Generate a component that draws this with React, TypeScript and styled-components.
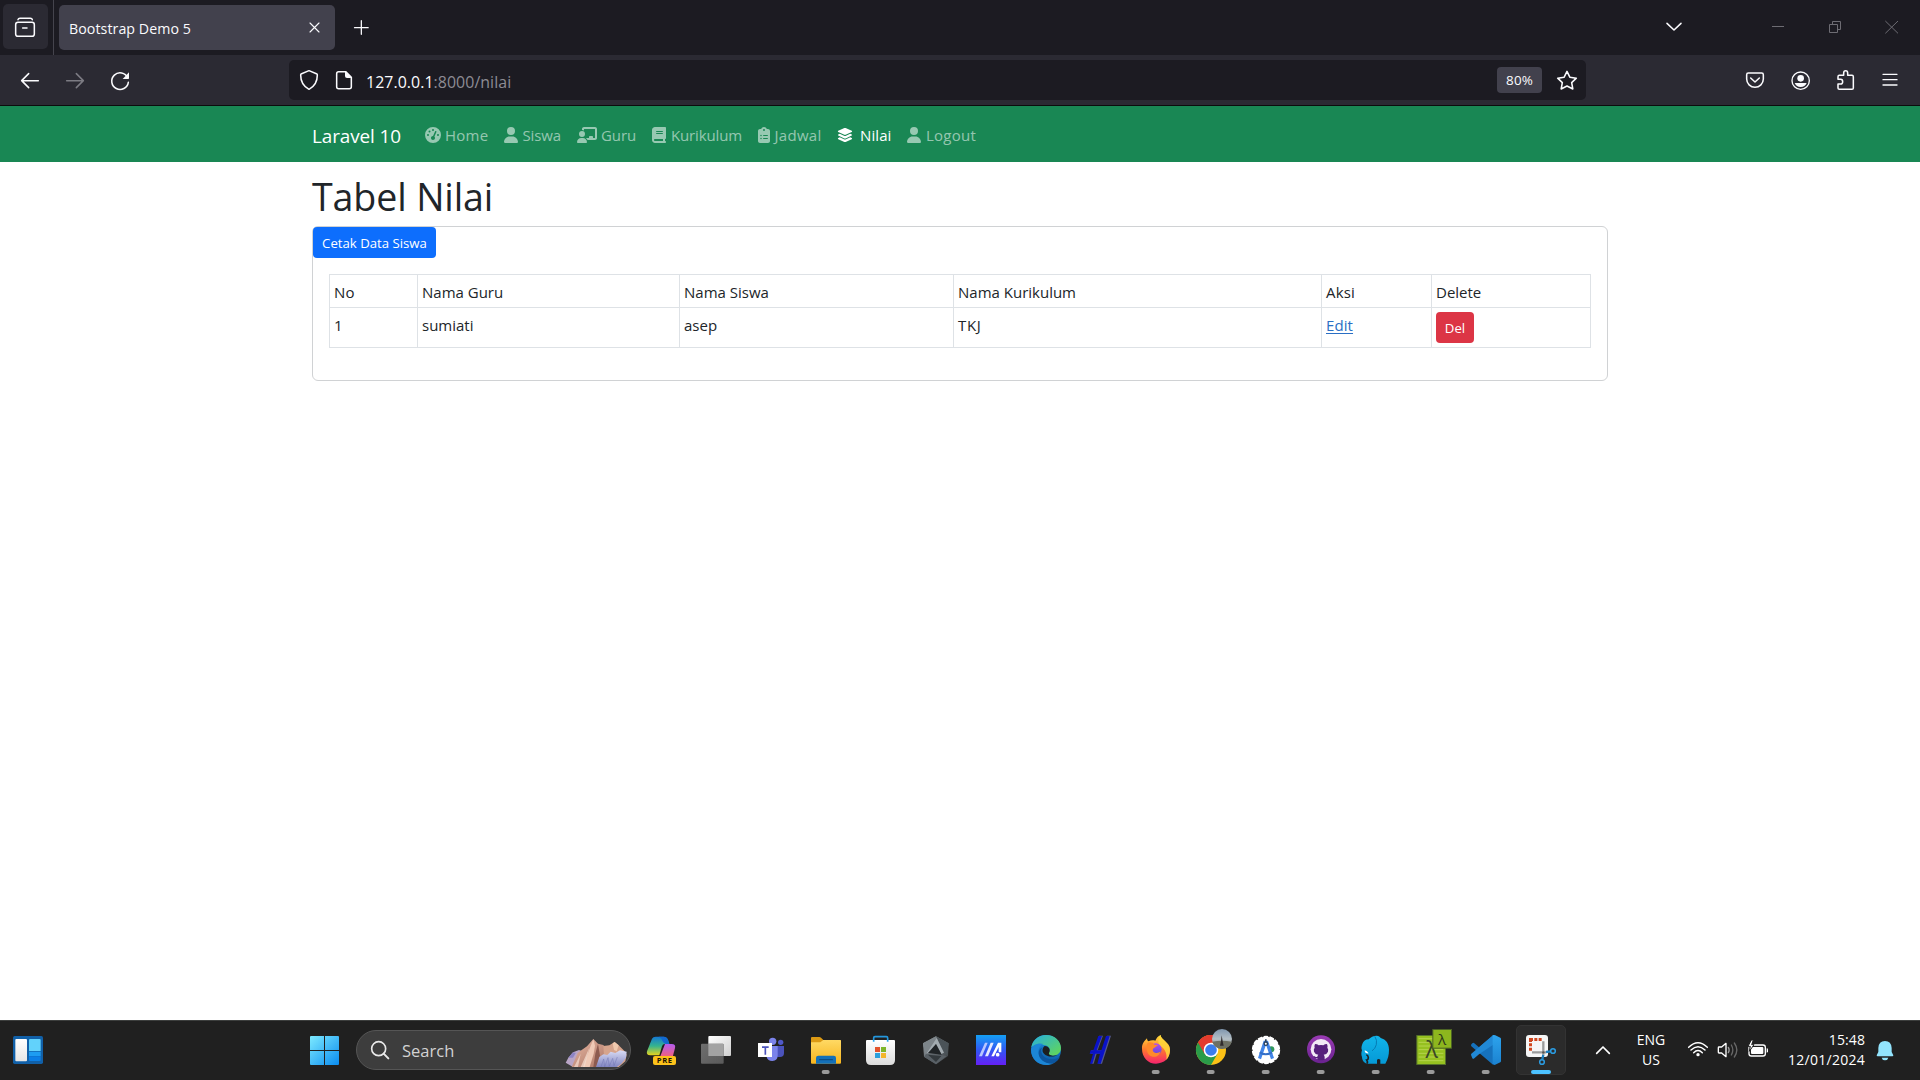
import React from 'react';
import styled, { createGlobalStyle } from 'styled-components';
import { FaGaugeHigh, FaUser, FaChalkboardUser, FaBook, FaClipboardList, FaLayerGroup } from 'react-icons/fa6';

const Global = createGlobalStyle`
  * { box-sizing: border-box; }
  body { margin: 0; background: #fff; overflow: hidden; }
`;

const Screen = styled.div`
  display: flex;
  flex-direction: column;
  width: 1920px;
  height: 1080px;
  font-family: 'Open Sans', 'Noto Sans', sans-serif;
  color: #212529;
`;

const Label = styled.span<{ $size?: number; $track?: number; $color?: string; $drop?: number }>`
  font-size: ${(p) => p.$size ?? 15}px;
  letter-spacing: ${(p) => p.$track ?? 0}px;
  color: ${(p) => p.$color ?? 'inherit'};
  padding-top: ${(p) => p.$drop ?? 0}px;
  white-space: pre;
`;

/* ---------- Browser chrome ---------- */

const TabStrip = styled.div`
  display: flex;
  align-items: center;
  height: 55px;
  padding-left: 3px;
  background: #1c1b22;
  color: #fbfbfe;
`;

const ViewButton = styled.div`
  height: 45px;
  width: 45px;
  margin-bottom: 2px;
  border-radius: 5px;
  background: #2b2a33;
`;

const StripDivider = styled.div`
  width: 1px;
  height: 55px;
  margin: 0 5px;
  background: #45444d;
`;

const Tab = styled.div`
  display: flex;
  align-items: center;
  justify-content: space-between;
  width: 276px;
  height: 45px;
  padding: 0 15px 0 10px;
  border-radius: 5px;
  background: #42414d;
`;

const StripEnd = styled.div`
  display: flex;
  margin-left: auto;
`;

const WindowControls = styled.div`
  display: flex;
  margin-left: 55px;
`;

const Toolbar = styled.div`
  display: flex;
  align-items: center;
  height: 51px;
  padding: 0 7px 0 8px;
  background: #2b2a33;
  border-bottom: 1px solid #0c0c0d;
  color: #fbfbfe;
`;

const AddressBar = styled.div`
  display: flex;
  align-items: center;
  width: 1297px;
  height: 40px;
  margin-left: 146px;
  border-radius: 5px;
  background: #1c1b22;
`;

const ZoomBadge = styled.div`
  display: flex;
  align-items: center;
  justify-content: center;
  width: 45px;
  height: 26px;
  margin-left: auto;
  border-radius: 4px;
  background: #42414d;
`;

const ToolbarEnd = styled.div`
  display: flex;
  margin-left: auto;
`;

const Svg = styled.svg`
  display: block;
  flex: none;
  overflow: visible;
`;

/* Artwork is drawn on a grid three times finer than the screen. */
function Art({ box, children }: { box: [number, number, number, number]; children: React.ReactNode }) {
  return (
    <Svg width={box[2] / 3} height={box[3] / 3} viewBox={box.join(' ')} fill="none">
      {children}
    </Svg>
  );
}

const line = { stroke: '#fbfbfe', strokeWidth: 4.6, strokeLinecap: 'round' as const, strokeLinejoin: 'round' as const };
const dim = { stroke: '#6d6c73', strokeWidth: 3 };

function BrowserChrome() {
  return (
    <>
      <TabStrip>
        <ViewButton>
          <Art box={[9, 12, 135, 135]}>
            <path d="M54 59q1-4 6-4h31q5 0 6 4" {...line} />
            <rect x="47" y="67" width="56" height="42" rx="7" {...line} />
            <path d="M68 84h13" {...line} />
          </Art>
        </ViewButton>
        <StripDivider />
        <Tab>
          <Label $size={14.2} $track={0.07} $drop={2}>Bootstrap Demo 5</Label>
          <Art box={[927, 66, 33, 33]}>
            <path d="M930 69l27 27M957 69l-27 27" {...line} strokeWidth={3.4} />
          </Art>
        </Tab>
        <Art box={[1005, 15, 150, 135]}>
          <path d="M1084 62v41M1063.500 83h41" {...line} strokeWidth={3.8} />
        </Art>
        <StripEnd>
          <Art box={[642, 0, 120, 165]}>
            <path d="M681 70l21 20l21-20" {...line} />
          </Art>
          <WindowControls>
            <Art box={[927, 0, 171, 165]}>
              <path d="M996 79.500h36" {...dim} />
            </Art>
            <Art box={[1098, 0, 171, 165]}>
              <path d="M1168.500 73.500h24v24h-24zM1177.500 73v-8.500h24v24h-8.500" {...dim} />
            </Art>
            <Art box={[1269, 0, 171, 165]}>
              <path d="M1336 63l38 37M1374 63l-38 37" {...dim} />
            </Art>
          </WindowControls>
        </StripEnd>
      </TabStrip>
      <Toolbar>
        <Art box={[24, 165, 135, 150]}>
          <path d="M115 242H66M86 221L65 242l21 21" {...line} />
        </Art>
        <Art box={[159, 165, 135, 150]}>
          <path d="M200 242h49M229 221l21 21l-21 21" {...line} stroke="#7c7b83" />
        </Art>
        <Art box={[294, 165, 135, 150]}>
          <path d="M383 233a25 25 0 1 0 2 14" {...line} />
          <path d="M387 217v18q0 2-2 2h-17z" fill="#fbfbfe" />
        </Art>
        <AddressBar>
          <Art box={[867, 180, 231, 120]}>
            <path d="M927 212l24 10q1 0 1 3c0 19-8 34-25 43c-17-9-25-24-25-43q0-3 1-3z" {...line} />
            <path d="M1016 215h21l17 17v28q0 6-6 6h-32q-6 0-6-6v-39q0-6 6-6z" {...line} />
            <path d="M1035 214l20 20h-14q-6 0-6-6z" fill="#fbfbfe" />
          </Art>
          <Label $size={15.9} $drop={3} $track={0.06}>127.0.0.1</Label>
          <Label $size={15.9} $drop={3} $track={0.06} $color="#8d8c94">:8000/nilai</Label>
          <ZoomBadge>
            <Label $size={13.4} $track={0.15}>80%</Label>
          </ZoomBadge>
          <Art box={[306, 180, 132, 120]}>
            <path d="M381 214l8.500 17.500l19.500 3l-14 13.500l3.500 19l-17.500-9l-17.500 9l3.500-19l-14-13.500l19.500-3z" {...line} />
          </Art>
        </AddressBar>
        <ToolbarEnd>
          <Art box={[879, 165, 135, 150]}>
            <path d="M925 219h40q5 0 5 5v13a25 25 0 0 1-50 0v-13q0-5 5-5z" {...line} />
            <path d="M932 234l13 12l13-12" {...line} />
          </Art>
          <Art box={[1014, 165, 135, 150]}>
            <circle cx="1082" cy="242" r="26" {...line} strokeWidth={4} />
            <circle cx="1082" cy="235" r="10" fill="#fbfbfe" />
            <path d="M1064 249h36q-5 12-18 12t-18-12z" fill="#fbfbfe" />
          </Art>
          <Art box={[1149, 165, 135, 150]}>
            <path d="M1194 238v-8q0-4 4-4h13v-7q0-6.500 6-6.500t6 6.500v7h13q4 0 4 4v34q0 4-4 4h-38q-4 0-4-4v-12h8q6 0 6-7t-6-7z" {...line} />
          </Art>
          <Art box={[1284, 165, 135, 150]}>
            <path d="M1329 223h42M1329 239h42M1329 255h42" {...line} strokeWidth={4} />
          </Art>
        </ToolbarEnd>
      </Toolbar>
    </>
  );
}

/* ---------- Page ---------- */

const Page = styled.main`
  flex: 1;
  background: #fff;
`;

const Navbar = styled.nav`
  display: flex;
  align-items: center;
  height: 56px;
  padding-left: 312px;
  background: #198754;
`;

const Brand = styled.a`
  width: 89px;
  margin-right: 16px;
  padding-top: 3px;
  font-size: 18.9px;
  letter-spacing: -0.09px;
  line-height: 30px;
  color: #fff;
  white-space: nowrap;
`;

const NavLink = styled.a<{ $active?: boolean; $width: number; $gap: number }>`
  display: flex;
  align-items: center;
  gap: ${(p) => p.$gap}px;
  width: ${(p) => p.$width}px;
  height: 40px;
  padding: 2px 0 0 8px;
  color: ${(p) => (p.$active ? '#fff' : 'rgba(255, 255, 255, 0.55)')};
  white-space: nowrap;
  svg { flex: none; }
`;

const Container = styled.div`
  width: 1296px;
  margin: 8px auto 0;
`;

const Heading = styled.h1`
  height: 48px;
  margin: 0 0 8px;
  padding-top: 3px;
  font-size: 37.6px;
  font-weight: 400;
  letter-spacing: -0.13px;
  line-height: 48px;
`;

const Card = styled.section`
  display: flex;
  flex-direction: column;
  align-items: flex-start;
  height: 155px;
  border: 1px solid #d0d2d4;
  border-radius: 6px;
`;

const Button = styled.button<{ $bg: string; $width: number }>`
  display: flex;
  align-items: center;
  justify-content: center;
  width: ${(p) => p.$width}px;
  height: 31px;
  padding: 0;
  border: 0;
  border-radius: 4px;
  background: ${(p) => p.$bg};
  color: #fff;
  font-family: inherit;
`;

const Table = styled.table`
  width: 1261px;
  margin: 16px 0 0 16px;
  border-collapse: collapse;
  table-layout: fixed;
`;

const Row = styled.tr<{ $height: number }>`
  height: ${(p) => p.$height}px;
`;

const Cell = styled.td<{ $control?: boolean }>`
  padding: ${(p) => (p.$control ? '4px' : '5px 4px 3px')};
  border: 1px solid #dee2e6;
  line-height: 24px;
  vertical-align: top;
`;

const EditLink = styled.a`
  color: #2a6fc4;
  text-decoration: underline;
  text-underline-offset: 2px;
`;

const navItems = [
  { icon: FaGaugeHigh, iconWidth: 16, label: 'Home', width: 79, track: 0.25, gap: 4 },
  { icon: FaUser, iconWidth: 14, label: 'Siswa', width: 73, track: -0.15, gap: 4.5 },
  { icon: FaChalkboardUser, iconWidth: 20, label: 'Guru', width: 75, track: -0.1, gap: 4 },
  { icon: FaBook, iconWidth: 14, label: 'Kurikulum', width: 106, track: -0.13, gap: 5 },
  { icon: FaClipboardList, iconWidth: 12, label: 'Jadwal', width: 79, track: 0.3, gap: 4.5 },
  { icon: FaLayerGroup, iconWidth: 16, label: 'Nilai', width: 70, track: 0.1, gap: 7, active: true },
  { icon: FaUser, iconWidth: 14, label: 'Logout', width: 90, track: 0.24, gap: 5 },
];

const columns = [88, 262, 274, 368, 110, 159];

function Website() {
  return (
    <Page>
      <Navbar>
        <Brand>Laravel 10</Brand>
        {navItems.map(({ icon: Icon, ...item }) => (
          <NavLink key={item.label} $active={item.active} $width={item.width} $gap={item.gap}>
            <Icon style={{ width: item.iconWidth, height: 16 }} />
            <Label $track={item.track}>{item.label}</Label>
          </NavLink>
        ))}
      </Navbar>
      <Container>
        <Heading>Tabel Nilai</Heading>
        <Card>
          <Button $bg="#0d6efd" $width={123}>
            <Label $size={13.2}>Cetak Data Siswa</Label>
          </Button>
          <Table>
            <colgroup>
              {columns.map((w, i) => (
                <col key={i} width={w} />
              ))}
            </colgroup>
            <tbody>
              <Row $height={33}>
                {['No', 'Nama Guru', 'Nama Siswa', 'Nama Kurikulum', 'Aksi', 'Delete'].map((t) => (
                  <Cell key={t}><Label $track={t.length < 5 ? 0.2 : 0}>{t}</Label></Cell>
                ))}
              </Row>
              <Row $height={40}>
                {['1', 'sumiati', 'asep', 'TKJ'].map((t) => (
                  <Cell key={t}><Label $track={t === 'TKJ' ? 0.7 : 0}>{t}</Label></Cell>
                ))}
                <Cell><EditLink><Label $track={0.1}>Edit</Label></EditLink></Cell>
                <Cell $control>
                  <Button $bg="#dc3545" $width={38}><Label $size={13.2}>Del</Label></Button>
                </Cell>
              </Row>
            </tbody>
          </Table>
        </Card>
      </Container>
    </Page>
  );
}

/* ---------- Taskbar ---------- */

const Taskbar = styled.footer`
  display: flex;
  height: 60px;
  background: #202020;
  box-shadow: inset 0 1px #3c3e3d;
  color: #fff;
`;

const Widgets = styled.div`
  width: 300px;
`;

const SearchPill = styled.div`
  display: flex;
  align-items: center;
  width: 275px;
  height: 40px;
  margin: 10px 2px 0 6px;
  border: 1px solid #555;
  border-radius: 20px;
  background: #3d3d3d;
  overflow: hidden;
`;

const PillArt = styled.div`
  margin-left: auto;
`;

const Tray = styled.div`
  display: flex;
  margin-left: auto;
`;

const TrayText = styled.div<{ $width: number; $align: string }>`
  display: flex;
  flex-direction: column;
  align-items: ${(p) => p.$align};
  width: ${(p) => p.$width}px;
  padding-top: 10px;
  line-height: 20px;
`;

const TaskIcon = ({ x, on, children }: { x: number; on?: boolean; children: React.ReactNode }) => (
  <Art box={[x, 30, 165, 180]}>
    {children}
    {on && <rect x={x + 71} y="180" width="24" height="12" rx="6" fill="#9a9a9a" />}
  </Art>
);

function Gradients() {
  const g = (id: string, a: string, b: string, diag = true, mid?: string) => (
    <linearGradient id={id} x1="0" y1="0" x2={diag ? 1 : 0} y2="1">
      <stop offset="0" stopColor={a} />
      {mid && <stop offset=".5" stopColor={mid} />}
      <stop offset="1" stopColor={b} />
    </linearGradient>
  );
  return (
    <defs>
      {g('win', '#7deaff', '#0a8cf0')}
      {g('wid', '#ffffff', '#e6e6e6', false)}
      {g('copA', '#1478d4', '#e9d51c', false, '#35b48e')}
      {g('copB', '#b45cf0', '#f2617a', false)}
      {g('tv', '#ffffff', '#cfcfcf')}
      {g('tv2', '#6e6e6e', '#5a5a5a')}
      {g('fold', '#ffd964', '#f7b51e', false)}
      {g('store', '#ffffff', '#dcdcdc', false)}
      {g('arm', '#9ba3a8', '#32373b')}
      {g('asus', '#14a0f4', '#6520f5', false, '#3057f4')}
      {g('edA', '#25aee0', '#66d94f')}
      {g('edB', '#1a8fe0', '#0c59a4', false)}
      {g('ffA', '#ffde3c', '#f5236e', false, '#ff7a2c')}
      {g('ffB', '#b14cf0', '#5a4ad8', false)}
      {g('mtA', '#e6b7a4', '#a8705f')}
      {g('mtB', '#d9dcf5', '#8286c0', false)}
      {g('gh', '#9a3bb4', '#6a2290', false)}
      {g('el', '#12b5ea', '#0599d6', false)}
      {g('photo', '#7f96ae', '#7b7d78', false, '#b4bfc6')}
      {g('vs', '#2da4ee', '#1b82d0', false)}
    </defs>
  );
}

const ActiveApp = styled.div`
  position: relative;
  width: 55px;
  height: 60px;
`;

const ActivePlate = styled.div`
  position: absolute;
  left: 3px;
  top: 5px;
  width: 50px;
  height: 50px;
  border: 1px solid #333;
  border-radius: 5px;
  background: #2b2b2b;
`;

const ActiveArt = styled.div`
  position: relative;
`;

function DesktopBar() {
  return (
    <Taskbar>
      <Widgets>
        <Art box={[0, 30, 900, 180]}>
          <Gradients />
          <rect x="39" y="78" width="90" height="84" rx="5" fill="#1160a8" />
          <rect x="46" y="87" width="35" height="67" rx="3" fill="url(#wid)" />
          <path d="M90 87h29q3 0 3 3v33H87V90q0-3 3-3z" fill="#62d2fb" />
          <path d="M87 125h35v13H87z" fill="#1d9df2" />
          <path d="M87 139h35v11q0 3-3 3H90q-3 0-3-3z" fill="#0b7fe6" />
        </Art>
      </Widgets>
      <Art box={[0, 30, 150, 180]}>
        <path d="M33 78h39v42H30V81q0-3 3-3zM75 78h39q3 0 3 3v39H75zM30 123h42v42H33q-3 0-3-3zM75 123h42v39q0 3-3 3H75z" fill="url(#win)" />
      </Art>
      <SearchPill>
        <Art box={[171, 63, 135, 114]}>
          <circle cx="236" cy="116" r="21" stroke="#e8e8e8" strokeWidth="5" />
          <path d="M251 131l14 14" stroke="#e8e8e8" strokeWidth="6" strokeLinecap="round" />
        </Art>
        <Label $size={16.5} $color="#d2d2d2">Search</Label>
        <PillArt>
          <Art box={[786, 63, 204, 114]}>
            <path d="M797 158l8-15l14-16l18-7l10 4l-8 47h-20z" fill="#b9a5c6" />
            <path d="M805 143l14-16l8 2l-8 14z" fill="#8c84c4" />
            <path d="M815 171l18-42l13-10l15-10l19-22l14 14l16 4l20 26l10 40z" fill="url(#mtA)" />
            <path d="M880 88l-9 22l-22 61h20l12-40l4-24z" fill="#efc9b6" />
            <path d="M894 101l6 36l-8 34h-12l6-40z" fill="#8d5b50" />
            <path d="M910 108l18-2l16-10l12 10l18 18l6 10l-4 20l-20 17h-42z" fill="#d6a48c" />
            <path d="M938 100l6-4l12 10l-6 18l-8-4z" fill="#f0c9ae" />
            <path d="M888 171l10-30l12-8l12 2l10-10l14 4l14-8l20 4l-2 18l-14 18l-14 10z" fill="url(#mtB)" />
            <path d="M903 171l8-24l3 24l10-28l4 26l10-24l4 22l10-26" stroke="#7276b4" strokeWidth="1.500" />
            <path d="M822 171l20-40l-8 40zM842 171l26-58l-14 58z" fill="#f5ddd0" opacity=".7" />
          </Art>
        </PillArt>
      </SearchPill>

      <TaskIcon x={-21}>
        <path d="M36 86q3-6 11-6h24q9 0 13 9l4 13h-14q-6 0-8 7l-8 27H31q-13 0-10-12z" fill="url(#copA)" />
        <path d="M56 80h15q9 0 13 9l4 13h-10q-8-1-10-8q-3-11-12-14z" fill="#1268cf" />
        <path d="M75 102h20q13 0 10 12l-6 23q-2 4-8 4H60z" fill="url(#copB)" />
        <rect x="39" y="138" width="69" height="27" rx="6" fill="#fcc21b" />
        <text x="74" y="160" textAnchor="middle" fontFamily="Open Sans" fontWeight="700" fontSize="23" letterSpacing="1.500" fill="#1c1400">PRE</text>
      </TaskIcon>
      <TaskIcon x={144}>
        <rect x="205" y="78" width="68" height="60" rx="3" fill="url(#tv)" />
        <rect x="183" y="101" width="68" height="60" rx="3" fill="url(#tv2)" />
        <path d="M205 101h43q3 0 3 3v34h-46z" fill="#a3a3a3" />
      </TaskIcon>
      <TaskIcon x={309}>
        <circle cx="422" cy="97" r="8" fill="#5059c9" />
        <path d="M404 108h28v21q0 12-12 12h-10z" fill="#4b53bc" />
        <circle cx="398" cy="94" r="11" fill="#7b83eb" />
        <path d="M378 108h35v28q0 17-16 17q-14 0-17-12z" fill="#7b83eb" />
        <rect x="354" y="99" width="42" height="42" rx="1" fill="#fff" />
        <path d="M366 109h20v5h-7.500v20h-5v-20H366z" fill="#4b53bc" />
      </TaskIcon>
      <TaskIcon x={474} on>
        <path d="M513 84q0-3 3-3h22q3 0 5 2l7 7h50q3 0 3 3v20h-90z" fill="#dc9a14" />
        <path d="M513 97h28l9-7h50q3 0 3 3v65q0 3-3 3h-84q-3 0-3-3z" fill="url(#fold)" />
        <path d="M528 161v-17q0-7 7-7h46q7 0 7 7v17z" fill="#1470b8" />
        <path d="M539 149h38" stroke="#0c4d86" strokeWidth="4" strokeLinecap="round" />
      </TaskIcon>
      <TaskIcon x={639}>
        <path d="M701 95V84q0-4 4-4h34q4 0 4 4v11" stroke="#2497dd" strokeWidth="5" />
        <path d="M681 90h81q3 0 3 3v57q0 15-15 15h-57q-15 0-15-15V93q0-3 3-3z" fill="url(#store)" />
        <path d="M701 95v-5M743 95v-5" stroke="#2aa6ee" strokeWidth="5" />
        <path d="M705 111h15v15h-15z" fill="#e2532c" />
        <path d="M723 111h15v15h-15z" fill="#7db52a" />
        <path d="M705 129h15v15h-15z" fill="#2ba0dc" />
        <path d="M723 129h15v15h-15z" fill="#f3b62c" />
      </TaskIcon>
      <TaskIcon x={804}>
        <path d="M888 79l38 21l-2 38l-36 25l-36-23l-3-40z" fill="url(#arm)" />
        <path d="M888 79l38 21l-6 36l-12-14z" fill="#4b5358" />
        <path d="M888 79l-39 21l8 34l18-26z" fill="#7d858a" />
        <path d="M890 84l22 44l-8 4l-16-30l-20 26l-8 2z" fill="#a2abb0" />
        <path d="M888 102l17 32l-41-5z" fill="#202427" />
        <path d="M858 132l50 4l12 2l-32 25l-36-23z" fill="#596066" />
        <path d="M864 134l40 4l-16 18z" fill="#33393d" />
      </TaskIcon>
      <TaskIcon x={9}>
        <rect x="48" y="75" width="90" height="90" fill="url(#asus)" />
        <path d="M75 98h8l-17 41h-9z" fill="#b9c6ff" />
        <path d="M92 98h9l-17 41h-9z" fill="#e6e9ff" />
        <path d="M114 98h10v29h-8v-16l-14 28h-8z" fill="#fff" />
        <circle cx="113" cy="134" r="5.500" fill="#fff" />
      </TaskIcon>
      <TaskIcon x={174}>
        <circle cx="258" cy="120" r="45" fill="url(#edB)" />
        <path d="M214 112c3-22 22-37 44-37c27 0 45 19 45 39c0 14-11 23-24 23c-10 0-15-4-13-8c6-8 3-20-10-23c-18-5-34-3-42 6z" fill="url(#edA)" />
        <path d="M213 117c6-13 22-20 38-15c-13 5-17 16-15 28c3 15 15 27 33 30c6 1 12 0 14-1c-30 16-70 0-70-42z" fill="#1c86d6" />
        <path d="M248 112c-9 8-4 26 12 33c12 5 26 4 40-4c-4 8-10 14-17 18c-22 6-45-8-47-27c-1-9 4-17 12-20z" fill="#0c559e" />
        <path d="M254 108c-8 6-8 17-2 23c8 9 26 12 40 4c-12 5-28 1-25-6c5-8 2-20-13-21z" fill="#1d1f20" />
      </TaskIcon>
      <TaskIcon x={339}>
        <path d="M417 77h12l-16 44h14l14-44h12l-27 84h-11l9-30h-14l-9 30h-6l9-30h-13l3-10h13z" fill="#56598a" />
        <path d="M415 78h11l-16 43h14l14-43h11l-27 83h-10l8-30h-14l-9 30h-7l9-30h-10l3-10h8z" fill="#0a12c8" />
      </TaskIcon>
      <TaskIcon x={504} on>
        <path d="M546 116c-1-15 8-24 15-31c0 5 2 7 4 9c8-4 15-4 21-2c3-7 8-14 16-17c0 8 7 12 12 17c13 12 16 18 16 29c0 24-18 40-42 40s-42-19-42-45z" fill="url(#ffA)" />
        <path d="M602 75c0 8 7 12 12 17c13 12 16 18 16 29c0 12-5 22-11 29c3-16-2-32-18-43c-8-6-8-21 1-32z" fill="#ffd83a" opacity=".85" />
        <circle cx="587" cy="118" r="18" fill="url(#ffB)" />
        <path d="M563 98c8-3 16-2 20 6l12 1c-5 2-6 6-12 8c-7 3-6 12 2 15c6 2 13 0 17-4c-3 13-16 20-28 15c-14-6-18-25-11-41z" fill="#ff8a2a" />
      </TaskIcon>
      <TaskIcon x={669} on>
        <circle cx="753" cy="120" r="45" fill="#fbc116" />
        <path d="M714 97.500A45 45 0 0 1 792 97.500H753z" fill="#e33b2e" />
        <path d="M714 97.500A45 45 0 0 0 753 165L772.500 131.500L753 120z" fill="#2a9c49" />
        <path d="M714 97.500L733.500 131.500L753 120V97.500H792A45 45 0 0 0 714 97.500z" fill="#e33b2e" />
        <circle cx="753" cy="120" r="22" fill="#fff" />
        <circle cx="753" cy="120" r="17.500" fill="#3b7ded" />
        <circle cx="786" cy="87" r="30" fill="url(#photo)" />
        <path d="M757 95q29-5 58 0a30 30 0 0 1-58 0z" fill="#6d7064" />
        <path d="M785 76l3 18l3 13h-11l3-13z" fill="#302b2d" />
      </TaskIcon>
      <TaskIcon x={834} on>
        <circle cx="918" cy="120" r="40" fill="#fff" stroke="#fff" strokeWidth="5" strokeDasharray="14 4" />
        <circle cx="934" cy="118" r="9" fill="#33985c" />
        <path d="M911 92h13l18 52l-9 4l-15-44l-15 44l-9-4z" fill="#4285e8" />
        <path d="M899 127q18 12 37 0" stroke="#3470c8" strokeWidth="6" />
        <circle cx="917.500" cy="101" r="7" fill="#29415f" />
        <circle cx="917.500" cy="101" r="3" fill="#fff" />
        <path d="M915 88h5v7h-5z" fill="#29415f" />
      </TaskIcon>
      <TaskIcon x={99} on>
        <circle cx="183" cy="118" r="42" fill="url(#gh)" />
        <circle cx="183" cy="118" r="31" fill="#f1e9f5" />
        <path d="M165 102q7 0 11 4q7-2 14 0q4-4 11-4q3 6 1 11q4 5 2 12q-3 8-13 9q3 3 3 8v7q-11 3-22 0v-5q-10 3-13-6q6 0 8 3q3 1 5-1q1-4 3-6q-10-1-13-9q-2-7 2-12q-2-5 1-11z" fill="#56207c" />
      </TaskIcon>
      <TaskIcon x={264} on>
        <path d="M326 88c6-6 14-11 24-11c6 0 10 3 12 7c16 4 25 17 25 35c0 16-3 28-11 42h-15v-12q-5-4-10 0v12h-27c-10 0-18-9-18-20c-3-6-2-14 0-20c-3-6-1-14 1-19c3-9 10-14 19-14z" fill="url(#el)" />
        <path d="M345 80q7 10 4 24q-3 12-12 18" stroke="#067bb4" strokeWidth="3" strokeLinecap="round" />
        <path d="M314 121q7 2 12 9q-7 1-11-3z" fill="#fff" />
        <path d="M319 134q6 2 6 9q0 6-5 7q4 5 1 11" stroke="#202020" strokeWidth="5" />
      </TaskIcon>
      <TaskIcon x={429} on>
        <rect x="470.500" y="76.500" width="86" height="87" fill="#96c020" stroke="#54702a" strokeWidth="3" />
        <path d="M476 86h74M476 97h74M476 108h74M476 119h74M476 130h74M476 141h74M476 152h74" stroke="#b5d34d" strokeWidth="3" />
        <text x="515" y="144" textAnchor="middle" fontFamily="Open Sans" fontWeight="400" fontSize="70" fill="#3b4726">λ</text>
        <rect x="518.500" y="58.500" width="56" height="56" fill="#8db61e" stroke="#4b6324" strokeWidth="3" />
        <text x="546" y="104" textAnchor="middle" fontFamily="Open Sans" fontSize="46" fill="#2f3a1c">λ</text>
      </TaskIcon>
      <TaskIcon x={594} on>
        <path d="M700 75L657 112L643 100q-3-3-6 0l-3 3q-2 3 0 6l66 56l3-25z" fill="#1672bd" />
        <path d="M634 137q-2-3 0-6l66-56l3 27l-46 31l-14 12q-3 3-6 0z" fill="#2189d6" />
        <path d="M700 75q3-1 6 1l15 7q2 1 2 4v66q0 3-2 4l-17 8l-6-3V76z" fill="url(#vs)" />
      </TaskIcon>
      <ActiveApp>
        <ActivePlate />
        <ActiveArt>
          <Art box={[759, 30, 165, 180]}>
            <rect x="798" y="75" width="66" height="66" rx="9" fill="#f6f6f6" />
            <path d="M807 84h12v9h-3v3h-9zM823 84h9v9h-9zM836 84h9v9h-9zM807 100h9v9h-9zM807 113h9v9h-9z" fill="#d0461e" />
            <path d="M850 94v40M816 127h42" stroke="#9b9b9b" strokeWidth="7" />
            <circle cx="850" cy="127" r="3.500" fill="#555" />
            <path d="M850 134l-3 14M858 126l14-2" stroke="#1c7fc0" strokeWidth="7" />
            <circle cx="846" cy="156" r="7" stroke="#2b9be0" strokeWidth="4.500" />
            <circle cx="879" cy="123" r="7" stroke="#2b9be0" strokeWidth="4.500" />
            <rect x="813" y="180" width="60" height="12" rx="6" fill="#4cc2ff" />
          </Art>
        </ActiveArt>
      </ActiveApp>
      <Tray>
        <Art box={[90, 30, 75, 180]}>
          <path d="M110 130l19-19l19 19" stroke="#fff" strokeWidth="5" strokeLinecap="round" strokeLinejoin="round" />
        </Art>
        <TrayText $width={72} $align="center">
          <Label $size={14}>ENG</Label>
          <Label $size={14}>US</Label>
        </TrayText>
        <Art box={[381, 30, 258, 180]}>
          <g stroke="#fff" strokeWidth="4.500" strokeLinecap="round">
            <path d="M386 112q28-27 56 0M393 120q21-20 42 0M401 128q13-13 26 0" />
          </g>
          <circle cx="414" cy="134" r="5" fill="#fff" />
          <path d="M477 111h8l13-11v40l-13-11h-8q-2 0-2-2v-14q0-2 2-2z" stroke="#fff" strokeWidth="4" strokeLinejoin="round" />
          <path d="M505 112q5 8 0 16" stroke="#9a9a9a" strokeWidth="4" strokeLinecap="round" />
          <path d="M514 105q9 15 0 30M523 99q15 21 0 42" stroke="#686868" strokeWidth="4" strokeLinecap="round" />
          <rect x="567" y="105" width="49" height="33" rx="7" stroke="#fff" strokeWidth="4" />
          <rect x="573" y="111" width="37" height="21" rx="3" fill="#fff" />
          <path d="M620 115q4 0 4 4v5q0 4-4 4z" fill="#fff" />
          <path d="M574 90l-10 19h7l-3 15l14-20h-7l5-14z" fill="#fff" stroke="#202020" strokeWidth="3" />
        </Art>
        <TrayText $width={92} $align="flex-end">
          <Label $size={14} $track={0.1}>15:48</Label>
          <Label $size={14} $track={0.27}>12/01/2024</Label>
        </TrayText>
        <Art box={[915, 30, 165, 180]}>
          <path d="M975 93q19 0 20 21v12l5 10q0 3-3 3h-44q-3 0-3-3l5-10v-12q1-21 20-21z" fill="#92e4fd" />
          <path d="M965 143h20q-2 8-10 8t-10-8z" fill="#92e4fd" />
        </Art>
      </Tray>
    </Taskbar>
  );
}

export default function App() {
  return (
    <Screen>
      <Global />
      <BrowserChrome />
      <Website />
      <DesktopBar />
    </Screen>
  );
}
